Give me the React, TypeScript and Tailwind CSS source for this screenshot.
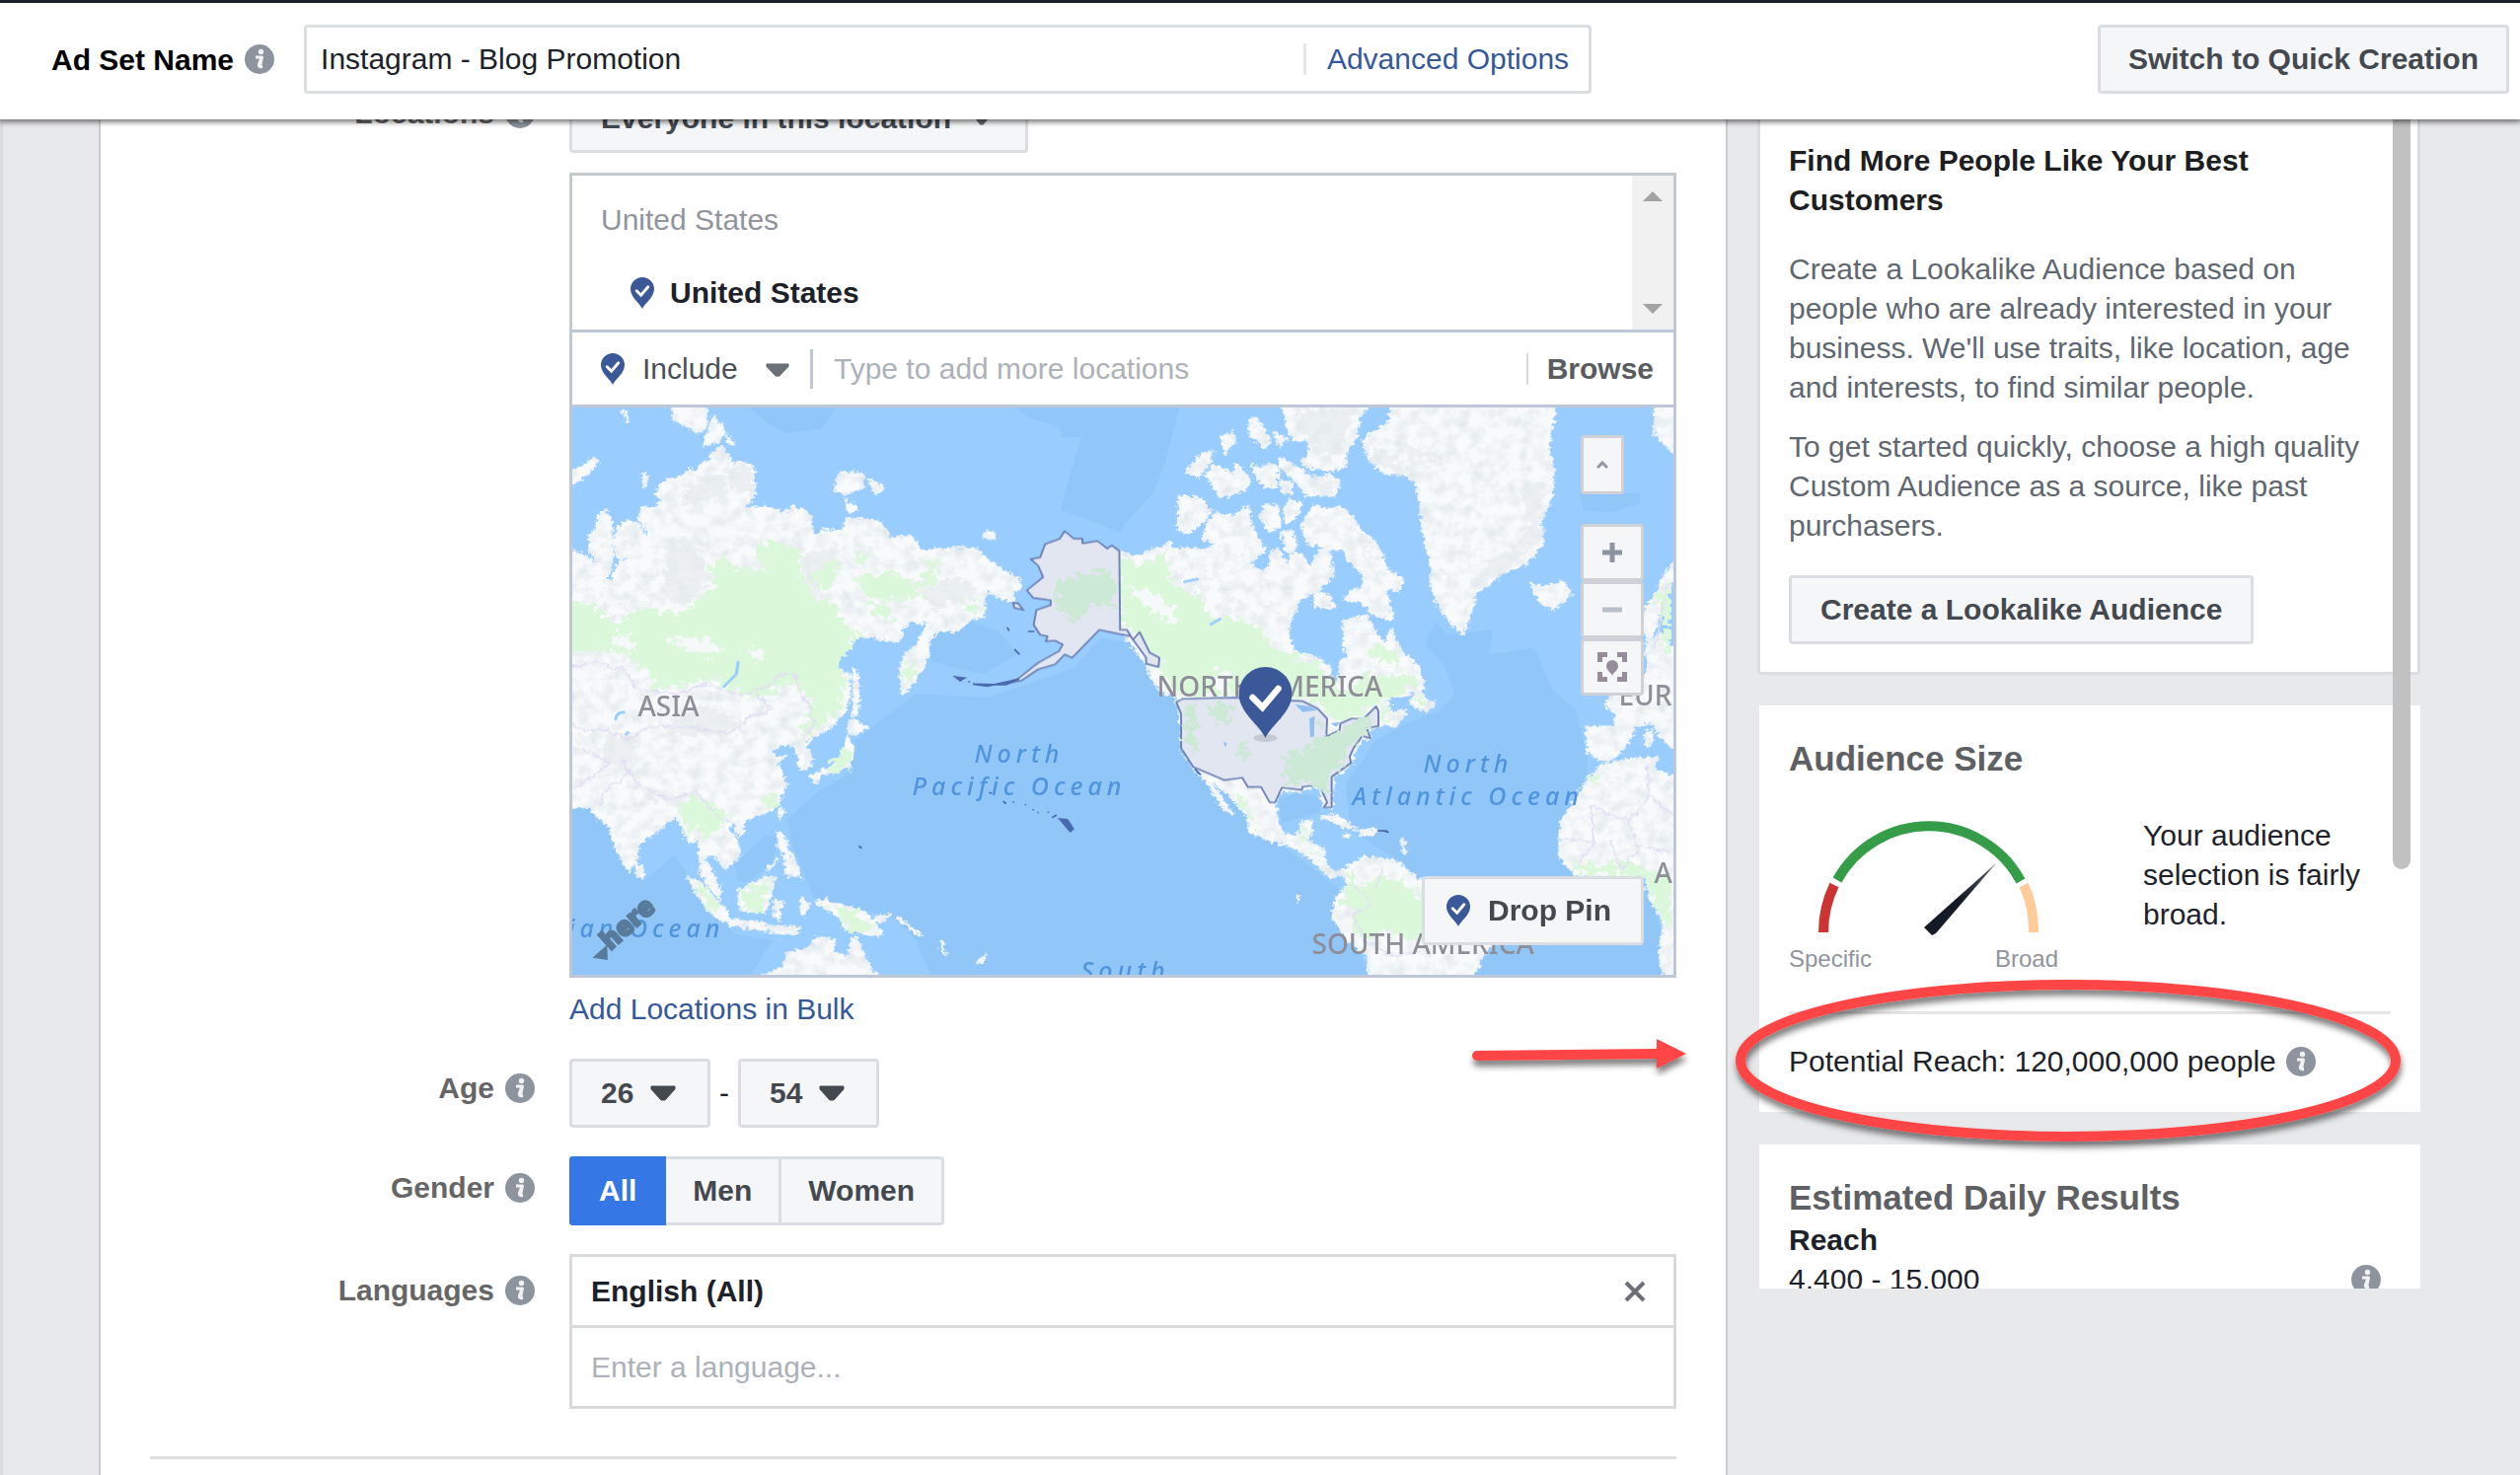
import type { ReactNode } from "react";

const genders = ["All", "Men", "Women"];

function InfoIcon() {
  return (
    <svg viewBox="0 0 30 30" className="h-[30px] w-[30px] shrink-0" aria-hidden="true">
      <circle cx="15" cy="15" r="15" fill="#8d949e" />
      <circle cx="16.5" cy="7.5" r="2.7" fill="#f0f1f3" />
      <path d="M11 13h6.5l-2 9.5h2.5M17 13l-2.6 7.5c-.5 2 .8 2.600 3.600 2" fill="none" stroke="#f0f1f3" strokeWidth="3" strokeLinejoin="round" />
    </svg>
  );
}

function PinShape() {
  return (
    <>
      <path d="M27 72C22 60 0 46 0 27a27 27 0 0 1 54 0C54 46 32 60 27 72Z" fill="#3b5998" />
      <path d="M14 31l10 10 16-19" fill="none" stroke="#fff" strokeWidth="6.500" strokeLinecap="round" />
    </>
  );
}

function Pin() {
  return (
    <svg viewBox="0 0 54 72" className="h-8 w-6 shrink-0" aria-hidden="true">
      <PinShape />
    </svg>
  );
}

function Caret({ className }: { className: string }) {
  return (
    <svg viewBox="0 0 26 16" className={className} preserveAspectRatio="none" aria-hidden="true">
      <path d="M1 1h24v3L15 15h-4L1 4Z" fill="currentColor" stroke="currentColor" strokeLinejoin="round" />
    </svg>
  );
}

function FormRow({ label, htmlFor, labelClass, children }: { label: string; htmlFor?: string; labelClass: string; children: ReactNode }) {
  return (
    <div className="grid grid-cols-[390px_1fr] gap-x-[35px]">
      <div className={`flex items-start justify-end gap-[11px] ${labelClass}`}>
        <label htmlFor={htmlFor} className="font-bold text-[#666666]">{label}</label>
        <span className="flex h-10 items-center">
          <InfoIcon />
        </span>
      </div>
      <div className="min-w-0">{children}</div>
    </div>
  );
}

function AgeSelect({ id, value, label }: { id: string; value: string; label: string }) {
  return (
    <div className="relative">
      <select
        id={id}
        aria-label={label}
        defaultValue={value}
        className="h-[70px] w-[143px] appearance-none rounded border-[3px] border-[#dadde1] bg-[#f5f6f7] pl-[29px] font-bold text-[#444950]"
      >
        <option>{value}</option>
      </select>
      <Caret className="pointer-events-none absolute right-[35px] top-[27px] h-4 w-[26px] text-[#444950]" />
    </div>
  );
}

/* Coordinates: the Americas, Greenland and Africa are drawn in a group shifted by 1516 units. */
function WorldMap() {
  return (
    <svg viewBox="50 339 2919 1725" preserveAspectRatio="none" className="absolute inset-0 h-full w-full" aria-hidden="true">
      <defs>
        <filter id="coast" x="0" y="0" width="100%" height="100%" colorInterpolationFilters="sRGB">
          <feTurbulence type="fractalNoise" baseFrequency="0.090" numOctaves="3" seed="4" result="n" />
          <feDisplacementMap in="SourceGraphic" in2="n" scale="24" xChannelSelector="R" yChannelSelector="G" result="land" />
          <feTurbulence type="fractalNoise" baseFrequency="0.030" numOctaves="5" seed="12" />
          <feColorMatrix values="0 0 0 0 .86  0 0 0 0 .89  0 0 0 0 .9  1.600 0 0 0 -.65" result="relief" />
          <feComposite in="relief" in2="land" operator="in" result="shade" />
          <feMerge>
            <feMergeNode in="land" />
            <feMergeNode in="shade" />
          </feMerge>
        </filter>
        <filter id="jitter" x="0" y="0" width="100%" height="100%" colorInterpolationFilters="sRGB">
          <feTurbulence type="fractalNoise" baseFrequency="0.060" numOctaves="3" seed="4" result="n" />
          <feDisplacementMap in="SourceGraphic" in2="n" scale="22" xChannelSelector="R" yChannelSelector="G" />
        </filter>
        <filter id="patch" x="0" y="0" width="100%" height="100%" colorInterpolationFilters="sRGB">
          <feTurbulence type="fractalNoise" baseFrequency="0.050" numOctaves="4" seed="9" result="n" />
          <feDisplacementMap in="SourceGraphic" in2="n" scale="64" xChannelSelector="R" yChannelSelector="G" />
        </filter>
      </defs>
      <rect x="50" y="339" width="2919" height="1725" fill="#99cdff" />

      {/* deep water */}
      <g fill="#91c6f9">
        <path d="M520 339H750L710 405 620 418 570 390Z" />
        <path d="M1225 339H1660L1620 510 1590 600 1516 690 1500 720 1440 690 1345 650 1370 540 1400 430 1345 430 1345 400 1260 370Z" />
        <path d="M1000 1030 1100 990 1180 1020 1230 1090 1140 1150 1060 1130 1000 1110Z" />
        <path d="M1700 1240 1640 1150 1560 1060 1450 1040 1380 1130 1260 1180 1150 1220 960 1210 870 1290 800 1350 785 1450 700 1510 620 1590 630 1660 690 1830 760 1850 900 1890 960 1960 1000 2064H2160L2080 1800 1900 1640 1760 1480Z" />
        <path d="M50 1555H150L180 1720 240 1780 320 1700 400 1830 480 1940 580 1960 560 2000 520 2064H50Z" />
        <path d="M480 1730 560 1640 600 1650 580 1720 520 1780 490 1780Z" />
        <path d="M2310 1060 2340 990 2370 1030 2490 1015 2480 1090 2600 1070 2650 1200 2710 1260 2740 1400 2740 1500 2660 1640 2660 1700 2720 1770 2300 1790 2230 1710 2160 1660 2110 1600 2100 1480 2140 1420 2180 1350 2260 1300 2350 1260 2390 1210 2360 1120Z" />
        <path d="M2450 1900 2900 1780 2940 1950 2940 2064H2440Z" />
        <path d="M1920 1530 1980 1510 2040 1530 2030 1570 1970 1590 1930 1600Z" />
        <path d="M2720 600H2880V630L2800 660 2730 650Z" />
      </g>

      {/* land */}
      <g fill="#f8fafc" stroke="#f8fafc" strokeWidth="7" strokeLinejoin="round" filter="url(#coast)">
        <path d="M40 778 75 782 98 805 115 820 110 790 96 780 96 735 116 705 118 670 135 652 152 680 154 740 156 790 150 830 132 868 155 866 168 825 178 800 200 812 190 792 168 795 162 740 175 700 200 682 228 695 250 745 252 720 228 675 232 645 270 645 290 620 270 600 300 560 340 550 360 525 372 540 400 505 412 510 420 480 445 460 465 490 470 510 515 508 532 530 532 600 505 650 560 640 610 660 635 640 680 665 685 710 695 735 710 712 770 715 772 680 800 675 865 688 885 720 888 738 945 732 965 750 968 775 1000 772 1060 768 1120 770 1145 795 1190 835 1230 858 1240 880 1215 905 1222 925 1190 920 1165 905 1150 890 1140 915 1140 975 1105 980 1070 1020 1030 1015 1005 1030 990 1060 995 1090 975 1140 945 1185 925 1210 920 1130 935 1090 965 1060 985 1010 1000 975 970 1000 950 985 925 1010 915 1050 880 1045 840 1035 800 1040 770 1080 740 1120 755 1145 785 1150 783 1190 785 1220 770 1270 735 1310 685 1340 665 1365 680 1390 683 1430 655 1440 650 1400 640 1365 600 1362 575 1385 590 1405 615 1400 590 1420 605 1450 615 1490 600 1530 575 1565 540 1580 500 1595 470 1605 460 1620 490 1660 493 1700 455 1740 440 1715 410 1695 400 1710 420 1750 440 1800 442 1835 410 1790 390 1750 388 1690 385 1650 360 1660 345 1620 325 1580 300 1600 270 1630 225 1665 222 1710 200 1748 180 1710 160 1660 150 1610 125 1595 100 1555 40 1555Z" />
        <path d="M318 330H405V400L380 418 355 395 320 375ZM425 365 455 415 440 440 400 455ZM40 535 85 515 105 490 118 500 100 530 40 580ZM745 590 760 535 820 540 822 580 780 600ZM835 555 878 585 855 600ZM775 620 805 650 785 657ZM1140 720 1165 715 1168 738 1142 735ZM183 347 200 370 195 382ZM462 425 476 450 464 450ZM236 545 248 545 240 578Z" />
        <path d="M793 1135 804 1140 810 1200 803 1275 794 1275 797 1200ZM790 1285 810 1300 830 1310 800 1335 778 1328ZM778 1340 793 1370 785 1430 740 1445 710 1455 695 1480 682 1460 740 1430 770 1400ZM598 1560 612 1562 600 1588ZM488 1600 508 1600 495 1640 482 1620ZM598 1630 617 1655 617 1680 640 1720 655 1765 620 1760 613 1700 595 1670ZM592 1715 568 1742 574 1740ZM355 1768 385 1780 430 1840 460 1870 465 1905 430 1890 390 1830ZM490 1810 530 1790 565 1765 585 1770 575 1820 560 1872 500 1870ZM462 1898 540 1903 570 1915 655 1920 640 1940 560 1928 470 1912ZM588 1835 612 1850 600 1862 600 1898 588 1890ZM660 1830 675 1850 665 1882 656 1860ZM695 1845 720 1835 740 1850 790 1860 830 1880 845 1900 872 1942 840 1942 800 1930 770 1920 760 1890 730 1870ZM850 1890 895 1880 880 1895 850 1902ZM912 1885 930 1905 922 1902ZM930 1905 975 1945 965 1940ZM1028 1960 1040 2005 1030 1990ZM1125 2025 1148 2005 1138 2025ZM545 2070 610 2040 620 2000 680 1980 700 1950 745 1960 740 1990 780 2015 790 1960 800 1950 820 2000 835 2040 862 2070ZM220 1722 238 1745 236 1768 222 1764Z" />
        <g transform="translate(1516 0)">
          <path d="M-20 775 15 790 45 790 70 770 105 765 115 745 125 770 170 768 210 775 240 800 280 825 320 800 350 835 385 830 385 790 400 765 420 800 430 830 440 780 470 790 490 830 510 780 540 768 548 850 520 885 465 920 440 975 430 1030 450 1085 500 1095 540 1125 545 1170 565 1175 570 1110 592 1095 578 1060 580 985 640 975 660 1020 690 1065 705 1015 730 1080 780 1130 790 1190 750 1210 690 1220 700 1270 745 1260 715 1310 690 1300 670 1310 640 1320 650 1345 628 1345 603 1395 598 1425 550 1462 548 1555 528 1555 515 1490 465 1505 415 1505 398 1540 402 1600 420 1640 460 1640 468 1600 495 1595 485 1660 525 1680 530 1730 560 1755 600 1730 630 1705 670 1710 720 1720 765 1765 940 1900 980 1960 940 2020 925 2070H650L645 2010 590 1960 550 1890 555 1840 590 1790 580 1755 550 1765 520 1745 500 1715 440 1670 380 1655 330 1630 325 1580 270 1510 215 1462 250 1520 285 1575 260 1560 225 1490 180 1432 148 1375 148 1270 135 1235 140 1220 100 1205 70 1165 55 1120 0 1030 -20 1015Z" />
          <path d="M145 610 200 615 225 655 210 680 165 725 140 710ZM215 700 240 660 290 670 325 640 335 700 370 770 345 800 300 815 250 820 215 770 250 750 205 740ZM355 670 375 635 405 640 410 700 380 715ZM420 660 435 620 465 630 450 680 425 690ZM415 720 440 715 455 760 430 780ZM215 540 240 515 290 545 290 505 330 560 320 590 250 610ZM165 535 205 475 232 475 215 520 190 550ZM335 510 355 530 380 510 403 520 400 580 375 580 350 560ZM255 430 285 415 290 440 265 480ZM330 375 345 370 385 440 370 460 330 420ZM395 415 425 435 410 455ZM415 330H645L620 370 610 430 585 480 580 520 545 530 480 520 470 500 490 480 485 435 455 440 435 420ZM410 495 470 530 500 560 540 545 565 560 560 605 480 605 450 560 415 520ZM415 560 440 570 440 600 415 595Z" />
          <path d="M470 690 500 640 540 650 570 640 600 670 620 710 660 745 685 800 690 830 735 860 725 900 700 890 690 900 710 985 660 970 625 930 580 920 600 895 630 890 635 850 590 800 580 770 540 770 520 760 480 750ZM500 895 540 915 555 945 500 945ZM755 1235 780 1195 800 1230 820 1240 800 1260 770 1250Z" />
          <path d="M705 330H1140L1130 400 1120 460 1135 530 1130 600 1115 650 1100 680 1108 750 1060 815 1000 840 930 905 905 1000 893 1028 860 990 830 940 812 880 812 810 800 770 790 710 780 620 770 570 745 540 685 540 645 490 630 440 665 410 700 385ZM1080 875 1105 885 1160 872 1182 905 1135 952 1105 935 1085 905Z" />
          <path d="M1405 330H1475V500L1430 450 1405 420ZM1475 780 1430 850 1400 920 1378 950 1375 1000 1385 1060 1420 1030 1475 1100V1395L1420 1340 1395 1295 1350 1310 1330 1360 1300 1400 1270 1415 1225 1385 1225 1310 1300 1310 1300 1270 1270 1240 1300 1210 1370 1180 1390 1120 1380 1080ZM1475 1470 1400 1440 1410 1405 1330 1410 1260 1430 1215 1490 1155 1600 1150 1700 1195 1760 1300 1765 1380 1760 1390 1830 1430 1900 1415 2000 1430 2070H1475ZM1380 1325 1395 1325 1390 1370 1380 1365Z" />
          <path d="M518 1585 560 1580 612 1620 590 1617 550 1595ZM620 1625 665 1622 658 1637 625 1637ZM580 1640 600 1640 590 1646ZM733 1650 745 1690 738 1690ZM455 1825H460V1840H455Z" />
        </g>
      </g>

      {/* mountain shading */}
      <g fill="#e4eaeb" opacity=".6" filter="url(#patch)">
        <path d="M300 740 380 760 420 860 340 940 290 900ZM350 580 420 540 470 570 400 620 340 640ZM450 520H530V600L480 590ZM660 780 760 760 720 850 690 920 660 880ZM960 900 1080 850 1120 900 1020 960ZM130 1340 220 1330 200 1450 130 1420ZM200 1480 340 1520 330 1560 230 1510ZM380 1250 500 1280 480 1330 280 1340 300 1310Z" />
        <path d="M2150 445 2220 490 2280 540 2240 540 2180 510ZM2250 460 2340 470 2350 500 2280 500ZM2560 600 2630 560 2610 740 2540 780 2590 690ZM2500 780 2600 770 2520 840 2430 900 2440 860ZM1970 339H2130L2090 470 2060 500 2010 440 1980 420ZM2000 540 2070 560 2070 590 2020 600ZM2090 660 2170 780 2200 830 2140 760Z" />
      </g>

      {/* forest */}
      <g fill="#dcf8da" filter="url(#patch)">
        <path d="M40 925 110 940 150 990 200 985 240 945 290 955 330 965 400 910 430 880 415 820 450 790 480 830 560 830 535 770 580 740 620 765 650 770 655 850 690 920 740 930 770 1000 820 1035 800 1045 755 1115 765 1150 770 1180 760 1260 730 1290 680 1325 655 1350 665 1300 690 1230 640 1180 580 1200 530 1220 470 1200 440 1160 360 1180 260 1200 255 1150 200 1090 100 1080 40 1090Z" />
        <path d="M690 840 750 800 750 880 700 890ZM790 860 900 835 960 870 980 915 900 925 850 920ZM980 830 1015 800 1020 870 980 880ZM800 770 830 765 825 815 805 810ZM830 930 880 935 900 990 860 970ZM1085 935 1130 930 1130 965 1095 960ZM555 1520 595 1505 590 1550 555 1560ZM335 1560 375 1520 460 1570 440 1630 400 1640 380 1600 355 1650ZM930 1120 970 1120 930 1195ZM500 1820 570 1775 555 1870 505 1865ZM370 1780 400 1800 445 1870 420 1860ZM740 1860 800 1870 855 1935 790 1925ZM780 1370 790 1400 770 1440 720 1450Z" />
        <g transform="translate(1516 0)">
          <path d="M-12 800 40 820 110 780 120 870 200 920 230 980 300 980 370 1020 380 1060 450 1095 520 1120 540 1180 600 1200 640 1140 700 1160 770 1150 780 1180 700 1225 650 1250 600 1280 565 1300 530 1260 480 1225 300 1215 150 1215 100 1170 90 1110 20 1020 -12 1000Z" />
          <path d="M640 1070 680 1060 720 1090 730 1130 680 1110ZM600 1740 620 1800 680 1760 760 1800 860 1900 780 1960 680 1930 640 1960 600 1920 610 1860 570 1850ZM290 1500 330 1560 350 1620 420 1650 350 1620 300 1540ZM470 1610 485 1620 460 1660ZM500 1680 520 1700 520 1730ZM1400 930 1450 870V1090L1420 1070 1430 1000ZM1185 1715 1250 1735 1340 1715 1380 1745 1450 1770V1950L1430 1900 1395 1830 1380 1765 1200 1755ZM1225 1475 1265 1440 1240 1485ZM770 1210 795 1235 775 1245ZM680 1250 700 1250 700 1300 680 1300Z" />
        </g>
      </g>
      <g fill="#f6f9fa" filter="url(#patch)">
        <path d="M310 1040 400 1035 450 1085 400 1095 320 1065ZM1516 880 1590 900 1650 960 1650 990 1590 960ZM1760 1140 1800 1140 1780 1200 1740 1180ZM2170 1740 2240 1720 2210 1760 2140 1800ZM150 1030 200 1030 220 1080 160 1070ZM500 1070 560 1080 540 1110Z" />
      </g>
      <path d="M490 1110 485 1150 450 1190 M165 1290Q165 1265 190 1265M190 1335 200 1325M1740 1000 1770 980M1670 870 1710 860" fill="none" stroke="#99cdff" strokeWidth="8" />

      {/* country borders */}
      <g fill="none" stroke="#e2dff4" strokeWidth="5" strokeLinejoin="round" filter="url(#jitter)">
        <path d="M50 1130 120 1110 160 1135 185 1130 215 1185 250 1200 330 1210 400 1180 460 1200 500 1215 580 1180 600 1150 640 1150 660 1220 680 1250 690 1300 660 1350" />
        <path d="M50 1300 80 1320 140 1320 200 1350 250 1310 350 1310 470 1330 520 1280 580 1260 540 1210M50 1370 100 1390 150 1420 80 1480 50 1500M180 1410 220 1480 300 1530 380 1510 430 1580 470 1600M125 1560 130 1510 200 1450" />
        <path d="M2900 1430 2905 1520 2850 1600 2750 1550 2760 1660 2680 1650M2850 1600 2870 1670 2960 1690M2905 1520 2969 1580M2760 1660 2720 1720M2800 1660 2830 1740 2880 1680M2920 1070 2950 900" />
        <path d="M2120 1790 2170 1850 2120 1880 2150 1960 2230 2010 2300 1990M2200 1740 2180 1800" />
      </g>

      {/* targeted region */}
      <g stroke="#6b7fb5" strokeWidth="5" strokeLinejoin="round">
        <path d="M1355 715 1380 738 1402 738V752L1442 745 1468 768 1480 758 1500 775 1502 1015 1520 1015 1536 1045 1554 1022 1581 1085 1606 1100 1604 1128 1571 1118 1571 1100 1530 1035 1447 1015 1375 1100 1355 1090 1330 1120 1285 1135 1240 1170 1180 1180 1230 1165 1285 1115 1340 1080 1350 1060 1330 1048 1305 1050 1310 1035 1290 1030 1273 1000 1280 955 1318 940 1318 925 1272 918 1255 895 1298 855 1285 820 1265 800 1290 795 1303 755 1342 738Z" fill="#e1e6f0" />
        <path d="M1218 932 1232 935 1246 955 1222 948Z" fill="#e1e6f0" />
        <path transform="translate(1516 0)" d="M135 1235 152 1225 300 1221 470 1232 510 1255 535 1285 533 1340 568 1320 570 1300 600 1285 632 1285 665 1248 671 1262 671 1308 640 1315 650 1345 628 1338 605 1375 595 1400 598 1420 547 1462 547 1555 526 1555 535 1540 515 1487 470 1492 468 1502 415 1495 397 1540 383 1540 360 1493 325 1493 310 1465 262 1472 180 1432 148 1375 148 1270Z" fill="#e1e6f0" />
      </g>
      <g fill="#cce9d5" filter="url(#patch)">
        <path d="M1330 870 1400 850 1480 830 1488 960 1460 930 1430 940 1385 1000 1330 930Z" />
        <path transform="translate(1516 0)" d="M160 1240 195 1240 185 1300 190 1390 165 1370 158 1330ZM220 1240 270 1240 280 1290 240 1300ZM300 1360 325 1340 325 1410 305 1400ZM420 1480 430 1380 475 1385 495 1350 540 1340 600 1300 655 1270 655 1300 620 1340 590 1390 580 1420 540 1450 535 1510 500 1480ZM500 1290 525 1290 520 1330Z" />
      </g>
      <path transform="translate(1516 0)" d="M488 1285 502 1278 500 1340 490 1342ZM450 1242 490 1248 508 1260 470 1265ZM545 1300 568 1295 560 1310ZM260 1355 270 1360 265 1372Z" fill="#8fc0ef" />
      <path d="M1065 1158 1090 1162 1078 1170ZM1100 1172 1104 1174M1112 1180 1200 1182 1235 1165 1210 1172 1150 1186ZM1203 1008 1208 1018M1222 1074 1236 1090M1258 1020 1275 1020M810 1672 817 1680M1342 1590 1362 1592 1378 1620 1370 1628ZM1322 1586 1334 1578M1192 1536 1200 1544M1155 1510 1162 1512M1218 1538 1221 1540M1250 1546 1253 1548M1270 1561 1273 1563M1283 1570 1286 1571M1310 1569 1313 1571M2184 1626H2208L2214 1632M1700 1438 1716 1456" fill="#4a6ab0" stroke="#4a6ab0" strokeWidth="5" />
    </svg>
  );
}

/* Labels sit in their own svg so that the glyphs are not scaled with the land. */
function MapLabels() {
  return (
    <svg viewBox="579 413 1117 575" preserveAspectRatio="xMidYMid slice" className="absolute inset-0 h-full w-full font-['Noto_Sans',sans-serif]">
      <g className="fill-[#8e8e98] text-[28px] font-medium">
        <text x="646" y="726">ASIA</text>
        <text x="1172" y="706">NORTH AMERICA</text>
        <text x="1329" y="967">SOUTH AMERICA</text>
        <text x="1640" y="715">EUROPE</text>
        <text x="1676" y="895">AFRICA</text>
      </g>
      <g className="fill-[#4f94dc] text-[25px] font-medium italic tracking-[5px]">
        <text x="987" y="773">North</text>
        <text x="924" y="806">Pacific Ocean</text>
        <text x="1442" y="783">North</text>
        <text x="1370" y="816">Atlantic Ocean</text>
        <text x="734" y="950" textAnchor="end">Indian Ocean</text>
        <text x="1095" y="993">South</text>
      </g>
      <g transform="rotate(-42 618 964)" className="fill-[#587b9b]">
        <text x="618" y="964" className="text-[27px] font-black" stroke="#587b9b" strokeWidth="2">here</text>
        <path d="M600 957h20l-10 12Z" />
      </g>
      <ellipse cx="1282" cy="748" rx="12" ry="4" fill="#a7adb8" opacity=".5" />
      <svg x="1255" y="676" width="54" height="72" viewBox="0 0 54 72">
        <PinShape />
      </svg>
    </svg>
  );
}

function LocationMap() {
  const control = "flex w-16 h-[58px] items-center justify-center rounded border-[3px] border-[#cfd1d6] bg-[#f5f6f7]";
  return (
    <div className="relative h-[578px] overflow-hidden border-[3px] border-t-0 border-[#bdc7d8]">
      <WorldMap />
      <MapLabels />
      <div className="absolute right-[30px] top-7 flex w-16 flex-col">
        <button aria-label="Collapse map" className="mb-[30px] flex h-[60px] w-11 items-center justify-center rounded border-[3px] border-[#cfd1d6] bg-[#f5f6f7]">
          <svg viewBox="0 0 12 8" className="h-2 w-3"><path d="M1 7l5-5 5 5" fill="none" stroke="#9297a3" strokeWidth="3" /></svg>
        </button>
        <button aria-label="Zoom in" className={control}>
          <svg viewBox="0 0 20 20" className="h-5 w-5"><path d="M10 0v20M0 10h20" stroke="#8d93a1" strokeWidth="5" /></svg>
        </button>
        <button aria-label="Zoom out" className={control}>
          <svg viewBox="0 0 20 20" className="h-5 w-5"><path d="M0 10h20" stroke="#b9bec9" strokeWidth="5" /></svg>
        </button>
        <button aria-label="Fit to locations" className={control}>
          <svg viewBox="0 0 30 30" className="h-[30px] w-[30px]">
            <path d="M2.500 10V2.500H10M20 2.500h7.500V10M27.500 20v7.500H20M10 27.500H2.500V20" fill="none" stroke="#978d9a" strokeWidth="5" />
            <path d="M15 24c-1-4-6-5-6-10a6 6 0 0 1 12 0c0 5-5 6-6 10Z" fill="#978d9a" />
          </svg>
        </button>
      </div>
      <button className="absolute bottom-[30px] right-[30px] flex h-[70px] items-center gap-[18px] rounded border-[3px] border-[#dadde1] bg-[#f5f6f7] pl-[22px] pr-[30px] font-bold text-[#444950]">
        <Pin />
        Drop Pin
      </button>
    </div>
  );
}

function Locations() {
  return (
    <FormRow label="Locations" htmlFor="scope" labelClass="pt-2.5">
      <div className="relative w-fit">
        <select id="scope" className="h-[70px] w-[465px] appearance-none rounded border-[3px] border-[#dadde1] bg-[#f5f6f7] pl-[29px] font-bold text-[#444950]">
          <option>Everyone in this location</option>
        </select>
        <Caret className="pointer-events-none absolute right-[37px] top-7 h-3.5 w-5 text-[#666b73]" />
      </div>
      <div className="mt-5 flex h-[159px] border-[3px] border-b-0 border-[#c4c9ce]">
        <div className="flex-1 pl-[29px] pt-[25px]">
          <div className="text-[#90949c]">United States</div>
          <div className="mt-[34px] flex items-center gap-4 pl-[30px] font-bold text-[#1d2129]">
            <Pin />
            United States
          </div>
        </div>
        <div className="flex w-[42px] flex-col items-center justify-between bg-[#f1f1f1] py-4 text-[#a3a3a3]">
          <svg viewBox="0 0 20 10" className="h-2.5 w-5"><path d="M10 0l10 10H0Z" fill="currentColor" /></svg>
          <svg viewBox="0 0 20 10" className="h-2.5 w-5"><path d="M0 0h20L10 10Z" fill="currentColor" /></svg>
        </div>
      </div>
      <div className="flex h-[79px] items-center border-[3px] border-[#bdc7d8] pl-[29px] pr-5">
        <Pin />
        <div className="relative ml-[18px]">
          <select aria-label="Include or exclude" className="w-[149px] appearance-none bg-transparent text-[#4b4f56]">
            <option>Include</option>
          </select>
          <Caret className="pointer-events-none absolute right-0 top-3.5 h-3.5 w-6 text-[#6b7078]" />
        </div>
        <div className="mx-[21px] h-10 w-[3px] bg-[#bdc7d8]" />
        <input aria-label="Add locations" placeholder="Type to add more locations" className="min-w-0 flex-1 outline-none placeholder:text-[#adb1b8]" />
        <div className="mr-[19px] h-8 w-[2px] bg-[#d6d8dc]" />
        <button className="font-bold text-[#5a5c60]">Browse</button>
      </div>
      <LocationMap />
      <a href="#bulk" className="mb-px mt-3 block w-fit text-[#365899]">Add Locations in Bulk</a>
    </FormRow>
  );
}

function Gauge() {
  return (
    <svg viewBox="1843 832 223 116" className="ml-[30px] h-[116px] w-[223px]" aria-hidden="true">
      <defs>
        <linearGradient id="needle" x1="0" y1="1" x2="1" y2="0">
          <stop offset=".5" stopColor="#141b26" />
          <stop offset="1" stopColor="#5b616b" />
        </linearGradient>
      </defs>
      <g fill="none" strokeWidth="10">
        <path d="M1848 945A106 108 0 0 1 1859 897" stroke="#cc3333" />
        <path d="M1862 892A106 106 0 0 1 2048 893" stroke="#359c47" />
        <path d="M2051 897A106 108 0 0 1 2061 945" stroke="#ffcc99" />
      </g>
      <path d="M1950 940 2023 875 1962 946 1958 948Z" fill="url(#needle)" />
    </svg>
  );
}

function ReachCallout() {
  return (
    <svg viewBox="1483 981 970 190" className="pointer-events-none absolute -left-[330px] -top-[75px] z-10 h-[190px] w-[970px] max-w-none" aria-hidden="true">
      <defs>
        <filter id="drop" x="-10%" y="-20%" width="120%" height="150%">
          <feDropShadow dx="1" dy="6" stdDeviation="3" floodColor="#000" floodOpacity=".5" />
        </filter>
      </defs>
      <g filter="url(#drop)">
        <ellipse cx="2096" cy="1075" rx="332" ry="77" fill="none" stroke="#ff4444" strokeWidth="10" />
      </g>
      <g filter="url(#drop)">
        <path d="M1497 1065 1679 1063V1053L1709 1068 1679 1083V1073L1497 1075A5 5 0 0 1 1497 1065Z" fill="#ff4444" />
      </g>
    </svg>
  );
}

function Sidebar() {
  return (
    <aside className="relative w-[672px] shrink-0">
      <section className="rounded border-[3px] border-[#dadde1] bg-white pb-7 pl-[29px] pr-10 pt-[55px]">
        <h3 className="font-bold text-[#1c1e21]">Find More People Like Your Best Customers</h3>
        <p className="mt-[30px] text-[#606770]">
          Create a Lookalike Audience based on people who are already interested in your business. We'll use traits, like location, age and interests, to find similar people.
        </p>
        <p className="mt-5 text-[#606770]">
          To get started quickly, choose a high quality Custom Audience as a source, like past purchasers.
        </p>
        <button className="mt-[30px] h-[70px] rounded border-[3px] border-[#dadde1] bg-[#f5f6f7] px-[29px] font-bold text-[#444950]">
          Create a Lookalike Audience
        </button>
      </section>

      <section className="ml-0.5 mt-[31px] bg-white px-[30px] pb-[31px] pt-[34px]">
        <h3 className="text-[35px] font-bold text-[#5e6063]">Audience Size</h3>
        <div className="mt-[38px] flex">
          <div className="w-[273px] shrink-0 pt-[5px]">
            <Gauge />
            <div className="mt-[9px] flex justify-between text-[24px] leading-[30px] text-[#90949c]">
              <span>Specific</span>
              <span>Broad</span>
            </div>
          </div>
          <p className="ml-[86px] text-[#1d2129]">Your audience selection is fairly broad.</p>
        </div>
        <div className="mt-[38px] h-[3px] bg-[#e5e6e8]" />
        <div className="relative mt-7 flex items-center gap-2.5 text-[#1d2129]">
          <ReachCallout />
          <span>Potential Reach: 120,000,000 people</span>
          <InfoIcon />
        </div>
      </section>

      <section className="ml-0.5 mt-[33px] h-[146px] overflow-hidden bg-white pl-[30px] pr-10 pt-[34px] text-[#1d2129]">
        <h3 className="text-[35px] font-bold text-[#5e6063]">Estimated Daily Results</h3>
        <div className="mt-[3px] font-bold">Reach</div>
        <div className="flex items-center justify-between">
          <span>4,400 - 15,000</span>
          <InfoIcon />
        </div>
      </section>

      <div className="absolute right-2.5 top-0 h-[796px] w-[18px] rounded-b-full bg-[#c1c1c1]" />
    </aside>
  );
}

export default function App() {
  return (
    <div className="flex h-screen flex-col overflow-hidden bg-[#e8e9eb] font-['Liberation_Sans',Arial,sans-serif] text-[30px] leading-[40px]">
      <header className="relative z-20 flex h-[121px] shrink-0 items-start border-t-[3px] border-[#1d2129] bg-white pl-[52px] pr-[11px] pt-[22px] shadow-[0_2px_5px_1px_rgba(0,0,0,0.5)]">
        <label htmlFor="adset" className="mt-4 font-bold text-black">Ad Set Name</label>
        <span className="ml-[11px] mt-5">
          <InfoIcon />
        </span>
        <div className="ml-[30px] flex h-[70px] min-w-0 max-w-[1305px] flex-1 items-center rounded border-[3px] border-[#dadde1] pl-[14px] pr-5">
          <input id="adset" defaultValue="Instagram - Blog Promotion" className="min-w-0 flex-1 text-[#1d2129] outline-none" />
          <div className="mr-[21px] h-8 w-[3px] bg-[#e5e6e8]" />
          <a href="#advanced" className="text-[#365899]">Advanced Options</a>
        </div>
        <button className="ml-auto h-[70px] shrink-0 rounded border-[3px] border-[#dadde1] bg-[#f5f6f7] px-7 font-bold text-[#444950]">
          Switch to Quick Creation
        </button>
      </header>

      <main className="-mt-9 flex flex-1 items-start gap-[30px] border-l-[3px] border-[#dcdcde] pl-[97px] pr-[101px]">
        <div className="flex min-h-full min-w-0 flex-1 flex-col gap-[29px] border-x-2 border-[#c9cbce] bg-white px-[50px]">
          <Locations />
          <FormRow label="Age" htmlFor="age-min" labelClass="pt-2.5">
            <div className="flex items-center gap-[9px] text-[#1d2129]">
              <AgeSelect id="age-min" value="26" label="Minimum age" />
              -
              <AgeSelect id="age-max" value="54" label="Maximum age" />
            </div>
          </FormRow>
          <FormRow label="Gender" labelClass="pt-3">
            <div role="radiogroup" aria-label="Gender" className="flex h-[70px] w-fit overflow-hidden rounded bg-[#f5f6f7] font-bold text-[#444950]">
              {genders.map((gender) => (
                <label
                  key={gender}
                  className="flex items-center border-y-[3px] border-r-[3px] border-[#dadde1] px-[27px] last:rounded-r has-checked:border-[#3578e5] has-checked:bg-[#3578e5] has-checked:pl-[30px] has-checked:text-white"
                >
                  <input type="radio" name="gender" defaultChecked={gender === "All"} className="sr-only" />
                  {gender}
                </label>
              ))}
            </div>
          </FormRow>
          <FormRow label="Languages" htmlFor="language" labelClass="pt-[17px]">
            <div className="border-[3px] border-[#d8dadd]">
              <div className="flex h-[72px] items-center justify-between border-b-[3px] border-[#d8dadd] pl-[19px] pr-7">
                <span className="font-bold text-[#1d2129]">English (All)</span>
                <button aria-label="Remove English (All)">
                  <svg viewBox="0 0 22 22" className="h-[22px] w-[22px]"><path d="M2 2l18 18M20 2L2 20" stroke="#6b7078" strokeWidth="4" /></svg>
                </button>
              </div>
              <input id="language" placeholder="Enter a language..." className="block h-[79px] w-full pl-[19px] outline-none placeholder:text-[#adb1b8]" />
            </div>
          </FormRow>
          <div className="mt-[19px] h-[3px] shrink-0 bg-[#dcdddf]" />
        </div>
        <Sidebar />
      </main>
    </div>
  );
}
